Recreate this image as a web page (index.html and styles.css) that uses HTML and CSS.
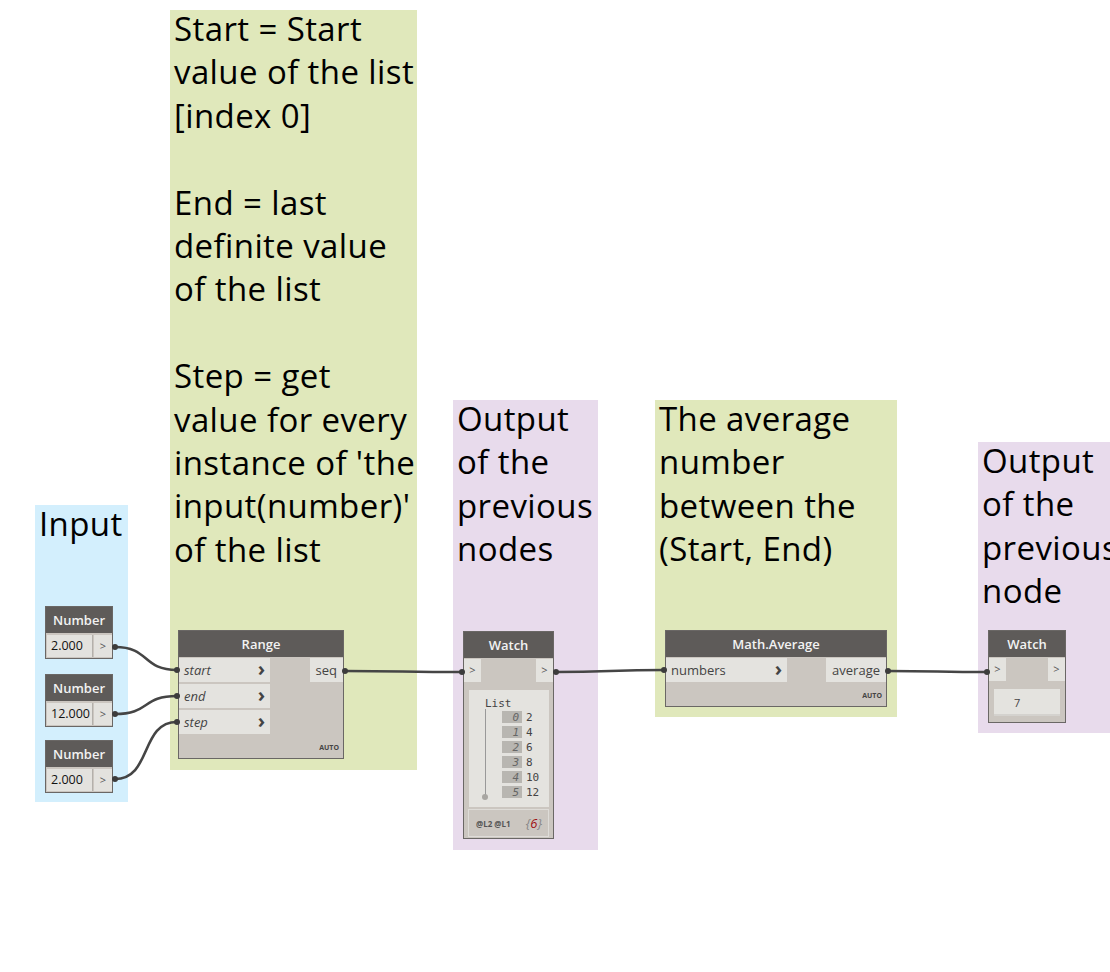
FILE: index.html
```html
<!DOCTYPE html>
<html lang="en">
<head>
    <meta charset="UTF-8">
    <title>Range Average Graph</title>
    <link rel="stylesheet" href="styles.css">
</head>
<body>
    <div class="canvas">
        <!-- groups -->
        <div class="group green" style="left:170px;top:10px;width:247px;height:760px;">
            <p>Start = Start<br>value of the list<br>[index 0]<br><br>End = last<br>definite value<br>of the list<br><br>Step = get<br>value for every<br>instance of 'the<br>input(number)'<br>of the list</p>
        </div>
        <div class="group blue" style="left:35px;top:505px;width:93px;height:297px;">
            <p>Input</p>
        </div>
        <div class="group purple" style="left:453px;top:400px;width:145px;height:450px;">
            <p>Output<br>of the<br>previous<br>nodes</p>
        </div>
        <div class="group green" style="left:655px;top:400px;width:242px;height:317px;">
            <p>The average<br>number<br>between the<br>(Start, End)</p>
        </div>
        <div class="group purple" style="left:978px;top:442px;width:140px;height:291px;">
            <p>Output<br>of the<br>previous<br>node</p>
        </div>

        <!-- wires -->
        <svg class="wires" width="1110" height="972">
            <path d="M115 647 C 150 647, 142 670, 177 670"/>
            <path d="M115 714 C 150 714, 142 696, 177 696"/>
            <path d="M115 779 C 152 779, 140 722, 177 722"/>
            <path d="M345 671 C 400 671, 405 672, 462 672"/>
            <path d="M556 672 C 610 672, 610 670, 664 670"/>
            <path d="M888 671 C 935 671, 940 672, 987 672"/>
        </svg>

        <!-- number nodes -->
        <div class="node number" style="left:45px;top:606px;">
            <div class="node-head">Number</div>
            <div class="num-row"><span class="num-field">2.000</span><span class="num-out">&gt;</span></div>
        </div>
        <div class="node number" style="left:45px;top:674px;">
            <div class="node-head">Number</div>
            <div class="num-row"><span class="num-field">12.000</span><span class="num-out">&gt;</span></div>
        </div>
        <div class="node number" style="left:45px;top:740px;">
            <div class="node-head">Number</div>
            <div class="num-row"><span class="num-field">2.000</span><span class="num-out">&gt;</span></div>
        </div>

        <!-- range -->
        <div class="node range" style="left:178px;top:630px;width:166px;">
            <div class="node-head">Range</div>
            <div class="node-body">
                <div class="inputs">
                    <div class="port in"><i>start</i><b>&#x203A;</b></div>
                    <div class="port in"><i>end</i><b>&#x203A;</b></div>
                    <div class="port in"><i>step</i><b>&#x203A;</b></div>
                </div>
                <div class="outputs">
                    <div class="port out">seq</div>
                </div>
            </div>
            <div class="auto">AUTO</div>
        </div>

        <!-- watch with list -->
        <div class="node watch" style="left:463px;top:631px;width:91px;">
            <div class="node-head">Watch</div>
            <div class="watch-ports"><span class="wport">&gt;</span><span class="wport">&gt;</span></div>
            <div class="list-view">
                <div class="list-title">List</div>
                <div class="list-items">
                    <div class="li"><span class="idx">0</span>2</div>
                    <div class="li"><span class="idx">1</span>4</div>
                    <div class="li"><span class="idx">2</span>6</div>
                    <div class="li"><span class="idx">3</span>8</div>
                    <div class="li"><span class="idx">4</span>10</div>
                    <div class="li"><span class="idx">5</span>12</div>
                </div>
            </div>
            <div class="list-foot"><span class="levels">@L2 @L1</span><span class="count">{<em>6</em>}</span></div>
        </div>

        <!-- math average -->
        <div class="node avg" style="left:665px;top:630px;width:222px;">
            <div class="node-head">Math.Average</div>
            <div class="node-body">
                <div class="inputs">
                    <div class="port in wide">numbers<b>&#x203A;</b></div>
                </div>
                <div class="outputs">
                    <div class="port out">average</div>
                </div>
            </div>
            <div class="auto">AUTO</div>
        </div>

        <!-- watch single -->
        <div class="node watch small" style="left:988px;top:630px;width:78px;">
            <div class="node-head">Watch</div>
            <div class="watch-ports"><span class="wport">&gt;</span><span class="wport">&gt;</span></div>
            <div class="value-box">7</div>
        </div>

        <!-- connector stubs -->
        <span class="dot" style="left:112px;top:644px;"></span>
        <span class="dot" style="left:112px;top:711px;"></span>
        <span class="dot" style="left:112px;top:776px;"></span>
        <span class="dot" style="left:174px;top:667px;"></span>
        <span class="dot" style="left:174px;top:693px;"></span>
        <span class="dot" style="left:174px;top:719px;"></span>
        <span class="dot" style="left:342px;top:668px;"></span>
        <span class="dot" style="left:459px;top:669px;"></span>
        <span class="dot" style="left:553px;top:669px;"></span>
        <span class="dot" style="left:661px;top:667px;"></span>
        <span class="dot" style="left:885px;top:668px;"></span>
        <span class="dot" style="left:984px;top:669px;"></span>
    </div>
</body>
</html>
```

FILE: styles.css
```css
body {
    margin: 0;
    background: #ffffff;
    font-family: "Open Sans", "Noto Sans", sans-serif;
    overflow: hidden;
}
.canvas {
    position: relative;
    width: 1110px;
    height: 972px;
    overflow: hidden;
}
.group {
    position: absolute;
    box-sizing: border-box;
    padding: 0 4px;
}
.group p {
    margin: -3px 0 0 0;
    font-size: 33px;
    letter-spacing: 0.4px;
    line-height: 43.4px;
    color: #000;
    white-space: nowrap;
}
.green {
    background: #e0e8bb;
}
.blue {
    background: #d3effd;
}
.purple {
    background: #e8dbec;
}
.wires {
    position: absolute;
    left: 0;
    top: 0;
}
.wires path {
    fill: none;
    stroke: #454545;
    stroke-width: 2.6;
}
.dot {
    position: absolute;
    width: 6px;
    height: 6px;
    border-radius: 50%;
    background: #3c3c3c;
}
.node {
    position: absolute;
    box-sizing: border-box;
    background: #cbc6c0;
    border: 1px solid #6a6765;
    font-size: 13px;
    color: #3c3c3c;
}
.node-head {
    background: #5e5b59;
    color: #f2f2f2;
    font-weight: 600;
    font-size: 13px;
    text-align: center;
    height: 26px;
    line-height: 26px;
}
.number {
    width: 68px;
}
.num-row {
    display: flex;
    padding: 2px 0 1px 1px;
    gap: 1px;
}
.num-field {
    flex: 1;
    height: 22px;
    line-height: 22px;
    background: #e3e2de;
    border-right: 1px solid #b3b0ab;
    box-sizing: border-box;
    padding-left: 4px;
    font-size: 12.5px;
    color: #111;
}
.num-out {
    width: 18px;
    height: 22px;
    line-height: 22px;
    text-align: center;
    background: #e3e2de;
    font-size: 11px;
    color: #555;
}
.node-body {
    display: flex;
    justify-content: space-between;
    padding-top: 1px;
}
.inputs {
    display: flex;
    flex-direction: column;
    gap: 2px;
}
.port {
    height: 24px;
    line-height: 24px;
    background: #e4e3df;
    font-size: 13px;
    color: #444;
    box-sizing: border-box;
}
.port.in {
    width: 91px;
    display: flex;
    justify-content: space-between;
    padding: 0 5px 0 5px;
}
.port.in.wide {
    width: 121px;
}
.port b {
    font-size: 20px;
    line-height: 22px;
    color: #444;
}
.port.out {
    padding: 0 6px;
    text-align: right;
}
.range {
    height: 129px;
}
.range .auto {
    margin-top: 9px;
}
.auto {
    text-align: right;
    font-size: 7px;
    font-weight: 700;
    color: #444;
    padding-right: 4px;
    line-height: 10px;
}
.avg {
    height: 77px;
}
.avg .auto {
    margin-top: 9px;
}
.watch-ports {
    display: flex;
    justify-content: space-between;
    padding-top: 1px;
}
.wport {
    width: 17px;
    height: 23px;
    line-height: 22px;
    background: #e4e3df;
    font-size: 11px;
    color: #555;
    text-align: center;
}
.watch {
    height: 208px;
}
.list-view {
    margin: 8px 4px 0 5px;
    height: 117px;
    background: #e4e3df;
    box-sizing: border-box;
    padding: 7px 0 0 16px;
    font-family: "DejaVu Sans Mono", monospace;
    font-size: 11px;
    color: #444;
    position: relative;
}
.list-view::before {
    content: "";
    position: absolute;
    left: 16px;
    top: 19px;
    height: 88px;
    border-left: 1px solid #999;
}
.list-view::after {
    content: "";
    position: absolute;
    left: 13px;
    top: 104px;
    width: 6px;
    height: 6px;
    border-radius: 50%;
    background: #a8a6a2;
}
.list-title {
    height: 14px;
    line-height: 14px;
}
.list-items {
    padding-left: 17px;
}
.li {
    height: 15px;
    line-height: 13px;
    display: flex;
    gap: 4px;
}
.idx {
    width: 20px;
    height: 12px;
    background: #b8b6b1;
    color: #666;
    text-align: right;
    font-style: italic;
    padding-right: 3px;
    box-sizing: border-box;
}
.list-foot {
    margin: 2px 4px 0 4px;
    height: 28px;
    border: 1px solid #dedcd8;
    box-sizing: border-box;
    display: flex;
    justify-content: space-between;
    align-items: center;
    padding: 0 6px 0 7px;
    font-size: 8px;
    font-weight: 700;
    color: #555;
}
.count {
    font-size: 13px;
    font-weight: 400;
    color: #888;
    font-style: italic;
}
.count em {
    color: #a01010;
}
.watch.small {
    height: 93px;
}
.value-box {
    margin: 8px 5px 0 5px;
    height: 27px;
    line-height: 27px;
    background: #e4e3df;
    border-bottom: 2px solid #d4d2ce;
    box-sizing: border-box;
    font-size: 11px;
    color: #444;
    padding-left: 20px;
}
```
